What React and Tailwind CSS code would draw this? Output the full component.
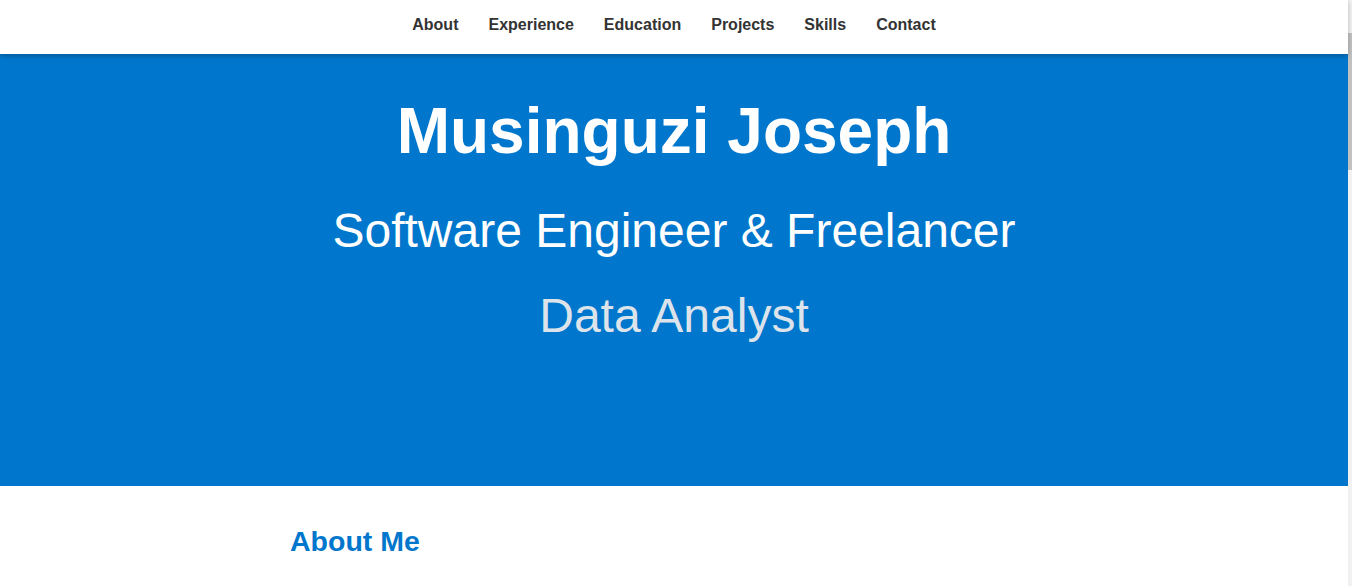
import React from "react";

const links = ["About", "Experience", "Education", "Projects", "Skills", "Contact"];

export default function App() {
  return (
    <div className="flex h-[586px] w-full overflow-hidden bg-white" style={{ fontFamily: '"Liberation Sans", Arial, sans-serif' }}>
      <div className="flex flex-1 flex-col">
        <nav className="relative z-10 flex h-[54px] justify-center bg-white pt-[16px] shadow-[0_2px_5px_rgba(0,0,0,0.25)]">
          {links.map((l) => (
            <a key={l} className="mx-[15px] text-[16px] font-bold leading-[18px] text-[#333333]">
              {l}
            </a>
          ))}
        </nav>
        <header className="flex h-[432px] flex-col items-center bg-[#0077cc] pt-[40px] text-center">
          <h1 className="text-[64px] font-bold leading-[74px] text-white">Musinguzi Joseph</h1>
          <p className="mt-[35px] text-[48px] leading-[55px] text-white">Software Engineer &amp; Freelancer</p>
          <p className="mt-[30px] text-[48px] leading-[55px] text-[#dde3ea]">Data Analyst</p>
        </header>
        <section className="px-[290px] pt-[39px]">
          <h2 className="text-[28.5px] font-bold leading-[33px] text-[#0077cc]">About Me</h2>
        </section>
      </div>
      <div className="flex w-[4px] flex-col bg-[#f1f1f1]">
        <div className="mt-[33px] h-[137px] w-full bg-[#c1c1c1]" />
      </div>
    </div>
  );
}
